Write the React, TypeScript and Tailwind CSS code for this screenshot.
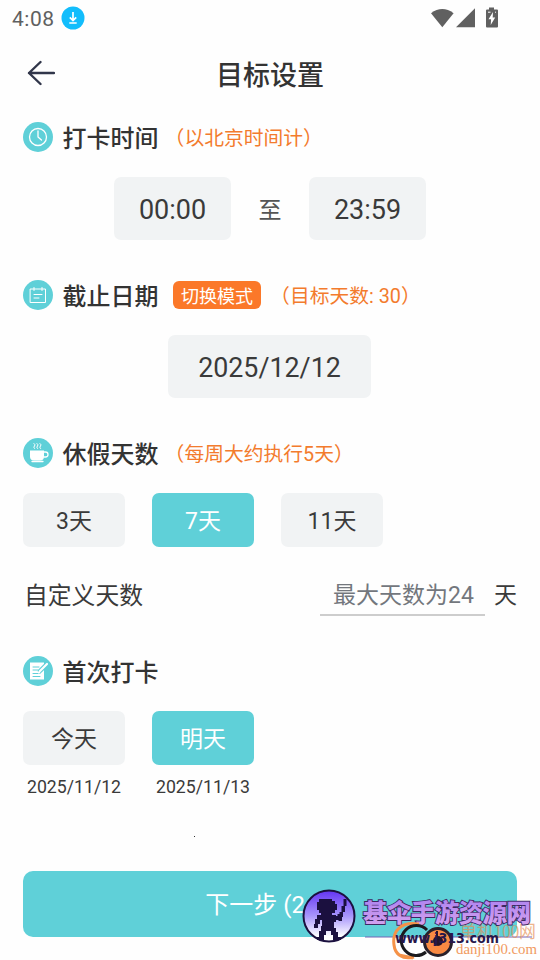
import type { ReactNode } from "react";

const TEAL = "#5fd0d8";

function Heading({ icon, title, children }: { icon: ReactNode; title: string; children?: ReactNode }) {
  return (
    <div className="flex h-[30px] items-center">
      <svg viewBox="0 0 30 30" className="mr-[9.500px] size-[30px] shrink-0" fill="none" stroke="white" strokeLinecap="round" strokeLinejoin="round">
        <circle cx="15" cy="15" r="15" fill={TEAL} stroke="none" />
        {icon}
      </svg>
      <h2 className="pt-[3px] text-[24px] leading-[30px] font-medium text-[#333]">{title}</h2>
      {children}
    </div>
  );
}

function Note({ children, className }: { children: ReactNode; className: string }) {
  return <span className={`pt-[3px] text-[19.800px] leading-[30px] text-[#f37b2d] [font-feature-settings:'halt'] ${className}`}>{children}</span>;
}

function Choice({ label, active }: { label: string; active?: boolean }) {
  return (
    <button className={`block h-[54px] w-[102px] rounded-[7px] pt-[2px] text-[23px] leading-[54px] ${active ? "bg-[#5fd0d8] text-white" : "bg-[#f1f3f4] text-[#3a3a3a]"}`}>
      {label}
    </button>
  );
}

function StatusBar() {
  return (
    <div className="flex h-9 items-center pl-3 text-[#606060]">
      <span className="pt-[2px] text-[21px] leading-9 tracking-[0.500px]">4:08</span>
      <svg viewBox="0 0 24 24" className="ml-[6px] size-6">
        <circle cx="12" cy="12" r="11.500" fill="#12bdfc" />
        <path d="M12 6v8M8.800 11.300l3.200 3.200 3.200-3.200M8.300 17h7.400" fill="none" stroke="white" strokeWidth="1.700" />
      </svg>
      <svg viewBox="0 0 70 22" className="mr-[41px] ml-auto h-[22px] w-[70px]" fill="#606060">
        <path d="M2 6.200Q13.300-2 24.600 6.200L13.300 20.200z" />
        <path d="M46 1.200v19H27z" />
        <path d="M60 .4h5v2h3a1 1 0 0 1 1 1v16a1 1 0 0 1-1 1H58a1 1 0 0 1-1-1v-16a1 1 0 0 1 1-1h2z" />
        <path d="m64 5-4.500 7.300h2.600L61.700 18l4.500-7.500h-2.500z" fill="white" />
        <path d="M59 5.200h2.500M66 5.200h1" stroke="white" />
      </svg>
    </div>
  );
}

function Watermarks() {
  return (
    <div className="pointer-events-none absolute inset-x-0 top-[880px] h-20">
      <svg viewBox="0 0 240 80" className="absolute top-0 right-0 h-20 w-[240px]">
        <defs>
          <linearGradient id="badge" x1="0" y1="0" x2="0" y2="1">
            <stop offset="0" stopColor="#6434f3" />
            <stop offset=".5" stopColor="#a896fb" />
            <stop offset=".9" stopColor="#fff" />
          </linearGradient>
          <linearGradient id="letters" x1="0" y1="0" x2="0" y2="1">
            <stop offset="0" stopColor="#a77df0" />
            <stop offset="1" stopColor="#d8a5ee" />
          </linearGradient>
        </defs>
        <circle cx="29" cy="36" r="25.500" fill="url(#badge)" stroke="#1b103f" strokeWidth="2" />
        <g fill="#1b103f">
          <path d="M22 19h10v2h3v3h2v6h-2v3h-3v2h4v1h5v4h-5v2h-2v6h2v4h2v5h3v3h-8v-5h-2v-4h-5v4h-2v5h-7v-3h2v-6h2v-5h1v-6h-2v4h-2v4h-4v-4h1v-5h2v-4h4v-2h-2v-3h-2v-8h2v-3h3z" />
          <path d="M43.500 19h3v7h-1.500v6h-2v5h-1v4h-3.500v-4h-1v-3h2v-2h2v-6h2z" />
        </g>
        <path d="M65 57h167" stroke="#7464b6" />
        <text x="160" y="58" fontSize="18" textLength="76" lengthAdjust="spacingAndGlyphs" fill="#e78d50" opacity=".65" fontFamily="Liberation Serif, Noto Sans CJK SC, sans-serif">单机100网</text>
        <text x="63" y="41.500" fontSize="24.500" fontWeight="900" textLength="168" fill="url(#letters)" stroke="#3d2860" strokeWidth="1.800" paintOrder="stroke" fontFamily="Noto Sans CJK SC, sans-serif">基伞手游资源网</text>
        <path d="M119 44C101 41 92 51 94 65c1 9 8 15 20 12M99 75l14 3" fill="none" stroke="#f59248" strokeWidth="3" />
        <path d="M127 50a15 15 0 1 0-1 22" fill="none" stroke="#1b1a1e" strokeWidth="3" />
        <circle cx="138" cy="62" r="13.500" fill="#f98a43" stroke="#29212b" strokeWidth="3" />
        <circle cx="138" cy="61" r="5" fill="#25152a" />
        <path d="M137 59V51" stroke="#25152a" strokeWidth="2" />
        <text x="95" y="62.500" fontSize="14" fontWeight="700" textLength="104" lengthAdjust="spacingAndGlyphs" fill="#27174b" fontFamily="DejaVu Sans, sans-serif">www.j313.com</text>
        <text x="156" y="74" fontSize="15.500" textLength="81" lengthAdjust="spacingAndGlyphs" fill="#f19a60" fontFamily="Liberation Serif, serif">danji100.com</text>
      </svg>
    </div>
  );
}

export default function App() {
  return (
    <main lang="zh-CN" className="relative flex h-[960px] w-[540px] flex-col overflow-hidden bg-[#fefefe] font-[Roboto,'Noto_Sans_CJK_SC',sans-serif] text-[#3a3a3a]">
      <StatusBar />
      <header className="grid h-[86px] grid-cols-[83px_1fr_83px] pb-3">
        <svg viewBox="0 0 28 26" className="ml-[27px] h-[26px] w-7 self-center" fill="none" stroke="#31364a" strokeWidth="2.400" strokeLinecap="round" strokeLinejoin="round">
          <path d="M27 13H2M13.500 2 2 13l11.500 11" />
        </svg>
        <h1 className="self-center pt-[5px] text-center text-[27px] leading-9 font-medium text-[#333]">目标设置</h1>
      </header>

      <section className="flex h-[158px] flex-col px-[23px]">
        <Heading title="打卡时间" icon={<><circle cx="15" cy="15" r="8.500" strokeWidth="1.300" /><path d="M15 9v6l3.500 3" strokeWidth="1.300" /></>}>
          <Note className="ml-[16px]">（以北京时间计）</Note>
        </Heading>
        <div className="mt-[25px] flex items-center justify-center text-[27px]">
          <div className="h-[63px] w-[117px] rounded-[7px] bg-[#f1f3f4] text-center leading-[67px]">00:00</div>
          <span className="w-[78px] pt-[5px] text-center text-[23px] text-[#555]">至</span>
          <div className="h-[63px] w-[117px] rounded-[7px] bg-[#f1f3f4] text-center leading-[67px]">23:59</div>
        </div>
      </section>

      <section className="flex h-[158px] flex-col px-[23px]">
        <Heading title="截止日期" icon={<path d="M7.500 9h15v13.500h-15zM11 7.500v3M19 7.500v3M11 14.500h8M11 18h5" strokeWidth="1" />}>
          <span className="ml-[14.500px] h-7 w-[88px] rounded-[6px] bg-[#fb7829] pt-px text-center text-[18px] leading-[29px] text-white">切换模式</span>
          <Note className="ml-[19px]">（目标天数: 30）</Note>
        </Heading>
        <div className="mt-[25px] mr-px h-[63px] w-[203px] self-center rounded-[7px] bg-[#f1f3f4] text-center text-[26.800px] leading-[67px]">2025/12/12</div>
      </section>

      <section className="flex h-[218px] flex-col px-[23px]">
        <Heading title="休假天数" icon={<><path d="M7 12.500h14v6q0 4-4 4h-6q-4 0-4-4z" fill="white" stroke="none" /><path d="M21 14h1.500a2 2 0 0 1 0 5H21M9 23.500h11" strokeWidth="1.300" /><path d="M11.500 10.500q-1.500-1.500 0-2.500T11 5.500M14.500 10.500q-1.500-1.500 0-2.500T14 5.500M17.500 10.500q-1.500-1.500 0-2.500T17 5.500" strokeWidth="1" /></>}>
          <Note className="ml-[16px]">（每周大约执行5天）</Note>
        </Heading>
        <div className="mt-[25px] flex gap-[27px]">
          <Choice label="3天" />
          <Choice label="7天" active />
          <Choice label="11天" />
        </div>
        <div className="mt-[25px] flex h-11 items-start text-[23px] leading-[48px]">
          <span className="ml-px text-[23.800px]">自定义天数</span>
          <span className="ml-auto h-11 w-[165px] border-b-2 border-[#cdcdcd] pl-[13px] text-[#73777d]">最大天数为24</span>
          <span className="ml-[9px]">天</span>
        </div>
      </section>

      <section className="flex h-[215px] flex-col px-[23px]">
        <Heading title="首次打卡" icon={<><path d="M7 6.500h14v17H7z" fill="white" stroke="none" /><path d="M10 11h6M10 14h5M10 17.500h7M10 20.500h7" stroke={TEAL} strokeWidth="1" /><path d="m24 8-7 7" stroke={TEAL} strokeWidth="4.500" /><path d="m24 8-7 7-1 1.500" strokeWidth="2.200" /></>} />
        <div className="mt-[25px] flex gap-[27px] text-center text-[17.700px]">
          <div><Choice label="今天" /><p className="mt-[7px] leading-[30px]">2025/11/12</p></div>
          <div><Choice label="明天" active /><p className="mt-[7px] leading-[30px]">2025/11/13</p></div>
        </div>
        <i className="mt-[34px] ml-[171px] size-px shrink-0 bg-[#333]" />
      </section>

      <button className="mx-[23px] h-[66px] rounded-[10px] bg-[#5fd0d8] pt-px pl-[2px] text-center text-[24px] leading-[66px] text-white">下一步 (2/3)</button>
      <Watermarks />
    </main>
  );
}
